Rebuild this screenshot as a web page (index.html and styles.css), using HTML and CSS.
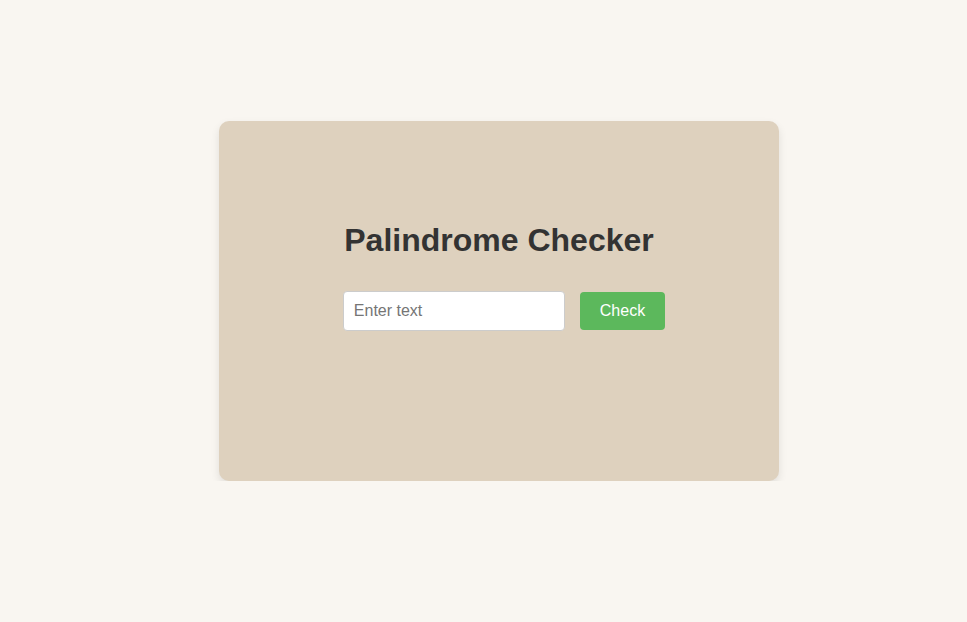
FILE: index.html
```html
<!DOCTYPE html>
<html lang="en">
<head>
<meta charset="utf-8">
<title>Palindrome Checker</title>
<link rel="stylesheet" href="styles.css">
</head>
<body>
<main class="card">
  <h1 class="title">Palindrome Checker</h1>
  <div class="row">
    <input class="text-input" type="text" placeholder="Enter text">
    <button class="check-btn" type="button">Check</button>
  </div>
</main>
</body>
</html>
```
FILE: styles.css
```css
html, body {
  margin: 0;
  padding: 0;
}
body {
  background: #f9f6f1;
  font-family: "Liberation Sans", Arial, sans-serif;
  padding: 121px 0 0 219px;
}
.card {
  box-sizing: border-box;
  width: 560px;
  height: 360px;
  background: #ded1be;
  border-radius: 10px;
  box-shadow: 0 4px 8px rgba(0, 0, 0, 0.1);
  padding-top: 101px;
  text-align: center;
}
.title {
  margin: 0 0 32px;
  font-size: 32px;
  line-height: 37px;
  font-weight: bold;
  color: #333;
}
.row {
  display: flex;
  justify-content: center;
  align-items: center;
}
.text-input {
  width: 200px;
  padding: 10px;
  margin: 0 10px;
  border: 1px solid #ccc;
  border-radius: 4px;
  font-family: "Liberation Sans", Arial, sans-serif;
  font-size: 16px;
  line-height: 18px;
  color: #333;
  background: #fff;
  outline: none;
}
.text-input::placeholder {
  color: #757575;
}
.check-btn {
  margin-left: 5px;
  padding: 10px 20px;
  border: none;
  border-radius: 4px;
  background: #5cb85c;
  color: #fff;
  font-family: "Liberation Sans", Arial, sans-serif;
  font-size: 16px;
  line-height: 18px;
  cursor: pointer;
}
```
